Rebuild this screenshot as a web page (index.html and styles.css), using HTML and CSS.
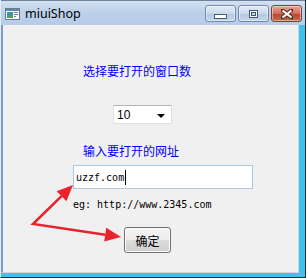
FILE: index.html
```html
<!DOCTYPE html>
<html lang="zh-CN">
<head>
    <meta charset="UTF-8">
    <title>miuiShop</title>
    <link rel="stylesheet" href="styles.css">
</head>
<body>
    <div class="window">
        <!-- Title bar -->
        <div class="titlebar">
            <svg class="app-icon" width="15" height="12" viewBox="0 0 15 12">
                <rect x="0.5" y="0.5" width="14" height="11" fill="#fff" stroke="#6b7a8c"/>
                <rect x="1" y="1" width="13" height="2" fill="#5b86b8"/>
                <rect x="2" y="4" width="6" height="6" fill="#3b8fb0"/>
                <rect x="2" y="7" width="6" height="3" fill="#4aa35a"/>
                <rect x="9" y="4" width="4" height="1" fill="#7a8797"/>
                <rect x="9" y="6" width="4" height="1" fill="#7a8797"/>
                <rect x="9" y="8" width="2" height="1" fill="#7a8797"/>
            </svg>
            <span class="title">miuiShop</span>
            <div class="caption-buttons">
                <div class="cap"><span class="glyph-min"></span></div>
                <div class="cap"><span class="glyph-max"></span></div>
                <div class="cap close">
                    <svg width="12" height="10" viewBox="0 0 12 10">
                        <path d="M1 1 L11 9 M11 1 L1 9" stroke="#5a2a24" stroke-width="4" stroke-linecap="square"/>
                        <path d="M1.5 1.5 L10.5 8.5 M10.5 1.5 L1.5 8.5" stroke="#fff" stroke-width="2.2"/>
                    </svg>
                </div>
            </div>
        </div>

        <!-- Form area -->
        <div class="client">
            <div class="label first">选择要打开的窗口数</div>
            <div class="combo">
                <span>10</span>
                <span class="arrow"></span>
            </div>
            <div class="label second">输入要打开的网址</div>
            <div class="textbox">uzzf.com<span class="caret"></span></div>
            <div class="hint">eg: http://www.2345.com</div>
            <button class="ok-btn">确定</button>
        </div>

        <!-- Red annotation arrows -->
        <svg class="arrows" width="306" height="278" viewBox="0 0 306 278">
            <g stroke="#e8232b" stroke-width="2.5" fill="none">
                <path d="M61.5 196.2 L33 224 L105.2 234.7"/>
            </g>
            <g fill="#e8232b">
                <polygon points="73,185 66.4,201.2 56.7,191.2"/>
                <polygon points="121,237 104.2,241.6 106.2,227.7"/>
            </g>
        </svg>
    </div>
</body>
</html>
```

FILE: styles.css
```css
body {
    margin: 0;
    padding: 0;
    background: #fff;
}

.window {
    position: relative;
    width: 306px;
    height: 278px;
    box-sizing: border-box;
    background: #3cc3ee;
    border-left: 1px solid #e4ecf5;
    border-right: 1px solid #1f2b38;
    border-bottom: 1px solid #1f2b38;
    overflow: hidden;
}

/* Title bar */
.titlebar {
    display: flex;
    align-items: center;
    height: 25px;
    box-sizing: border-box;
    border-top: 1px solid #6f849c;
    background: linear-gradient(#d3e1f1, #bcd1ea 45%, #b6cce7);
}

.app-icon {
    margin-left: 4px;
    margin-top: 1px;
}

.title {
    margin-left: 5px;
    font-family: "Noto Sans", Arial, sans-serif;
    font-size: 12.5px;
    color: #000;
}

.caption-buttons {
    display: flex;
    gap: 2px;
    margin-left: auto;
    margin-right: 3px;
    align-self: flex-start;
    margin-top: 4px;
}

.cap {
    display: flex;
    align-items: center;
    justify-content: center;
    width: 29px;
    height: 15px;
    border: 1px solid #7189ac;
    border-radius: 3px;
    background: linear-gradient(#e3ecf7, #c9d8ea 50%, #b3c8e1 51%, #c3d6ec);
    box-shadow: inset 0 0 0 1px rgba(255, 255, 255, 0.45);
}

.cap.close {
    width: 29px;
    border-color: #8b3a30;
    background: linear-gradient(#e8a496, #d0705f 50%, #c1432d 51%, #d0614a);
}

.glyph-min {
    width: 11px;
    height: 3px;
    margin-top: 5px;
    background: #fff;
    border: 1px solid #475c78;
}

.glyph-max {
    width: 9px;
    height: 8px;
    box-sizing: border-box;
    border: 1px solid #3d5472;
    background: #c9d8ea;
    box-shadow: inset 0 0 0 1px #fff, inset 0 0 0 2px #3d5472;
}

/* Client area */
.client {
    position: relative;
    width: 298px;
    height: 248px;
    padding-top: 40px;
    box-sizing: border-box;
    background: #f0f0f0;
    border-left: 2px solid #7b9dcb;
    border-right: 1px solid #d6d6d6;
    border-bottom: 1px solid #d6d6d6;
    display: flex;
    flex-direction: column;
    align-items: flex-start;
}

.label {
    margin-left: 80px;
    font-family: "Noto Sans CJK SC", sans-serif;
    font-size: 12px;
    line-height: 12px;
    color: #0000ff;
}

.label.second {
    margin-top: 21px;
}

.combo {
    display: flex;
    align-items: center;
    width: 59px;
    height: 19px;
    box-sizing: border-box;
    margin-top: 28px;
    margin-left: 110px;
    padding-left: 3px;
    padding-right: 6px;
    background: #fff;
    border: 1px solid #e0e0e0;
    border-top-color: #b4b4b4;
    font-family: "Liberation Sans", Arial, sans-serif;
    font-size: 12px;
}

.combo .arrow {
    margin-left: auto;
    width: 0;
    height: 0;
    border-left: 4px solid transparent;
    border-right: 4px solid transparent;
    border-top: 4px solid #000;
    margin-top: 2px;
}

.textbox {
    display: flex;
    align-items: center;
    width: 180px;
    height: 24px;
    box-sizing: border-box;
    margin-top: 8px;
    margin-left: 70px;
    padding-left: 2px;
    background: #fff;
    border: 1px solid #a9c8e6;
    font-family: "DejaVu Sans Mono", monospace;
    font-size: 10px;
    color: #000;
}

.caret {
    width: 1px;
    height: 15px;
    margin-left: 1px;
    background: #000;
}

.hint {
    margin-top: 10px;
    margin-left: 70px;
    font-family: "DejaVu Sans Mono", monospace;
    font-size: 10px;
    line-height: 12px;
    color: #000;
}

.ok-btn {
    width: 47px;
    height: 26px;
    margin-top: 16px;
    margin-left: 121px;
    padding: 0;
    border: 1px solid #707070;
    border-radius: 3px;
    background: linear-gradient(#f4f4f4, #ebebeb 50%, #dddddd 51%, #cfcfcf);
    box-shadow: inset 0 0 0 1px #fcfcfc;
    font-family: "Noto Sans CJK SC", sans-serif;
    font-size: 12px;
    color: #000;
}

/* Annotation overlay */
.arrows {
    position: absolute;
    top: 0;
    left: -1px;
    pointer-events: none;
}
```
